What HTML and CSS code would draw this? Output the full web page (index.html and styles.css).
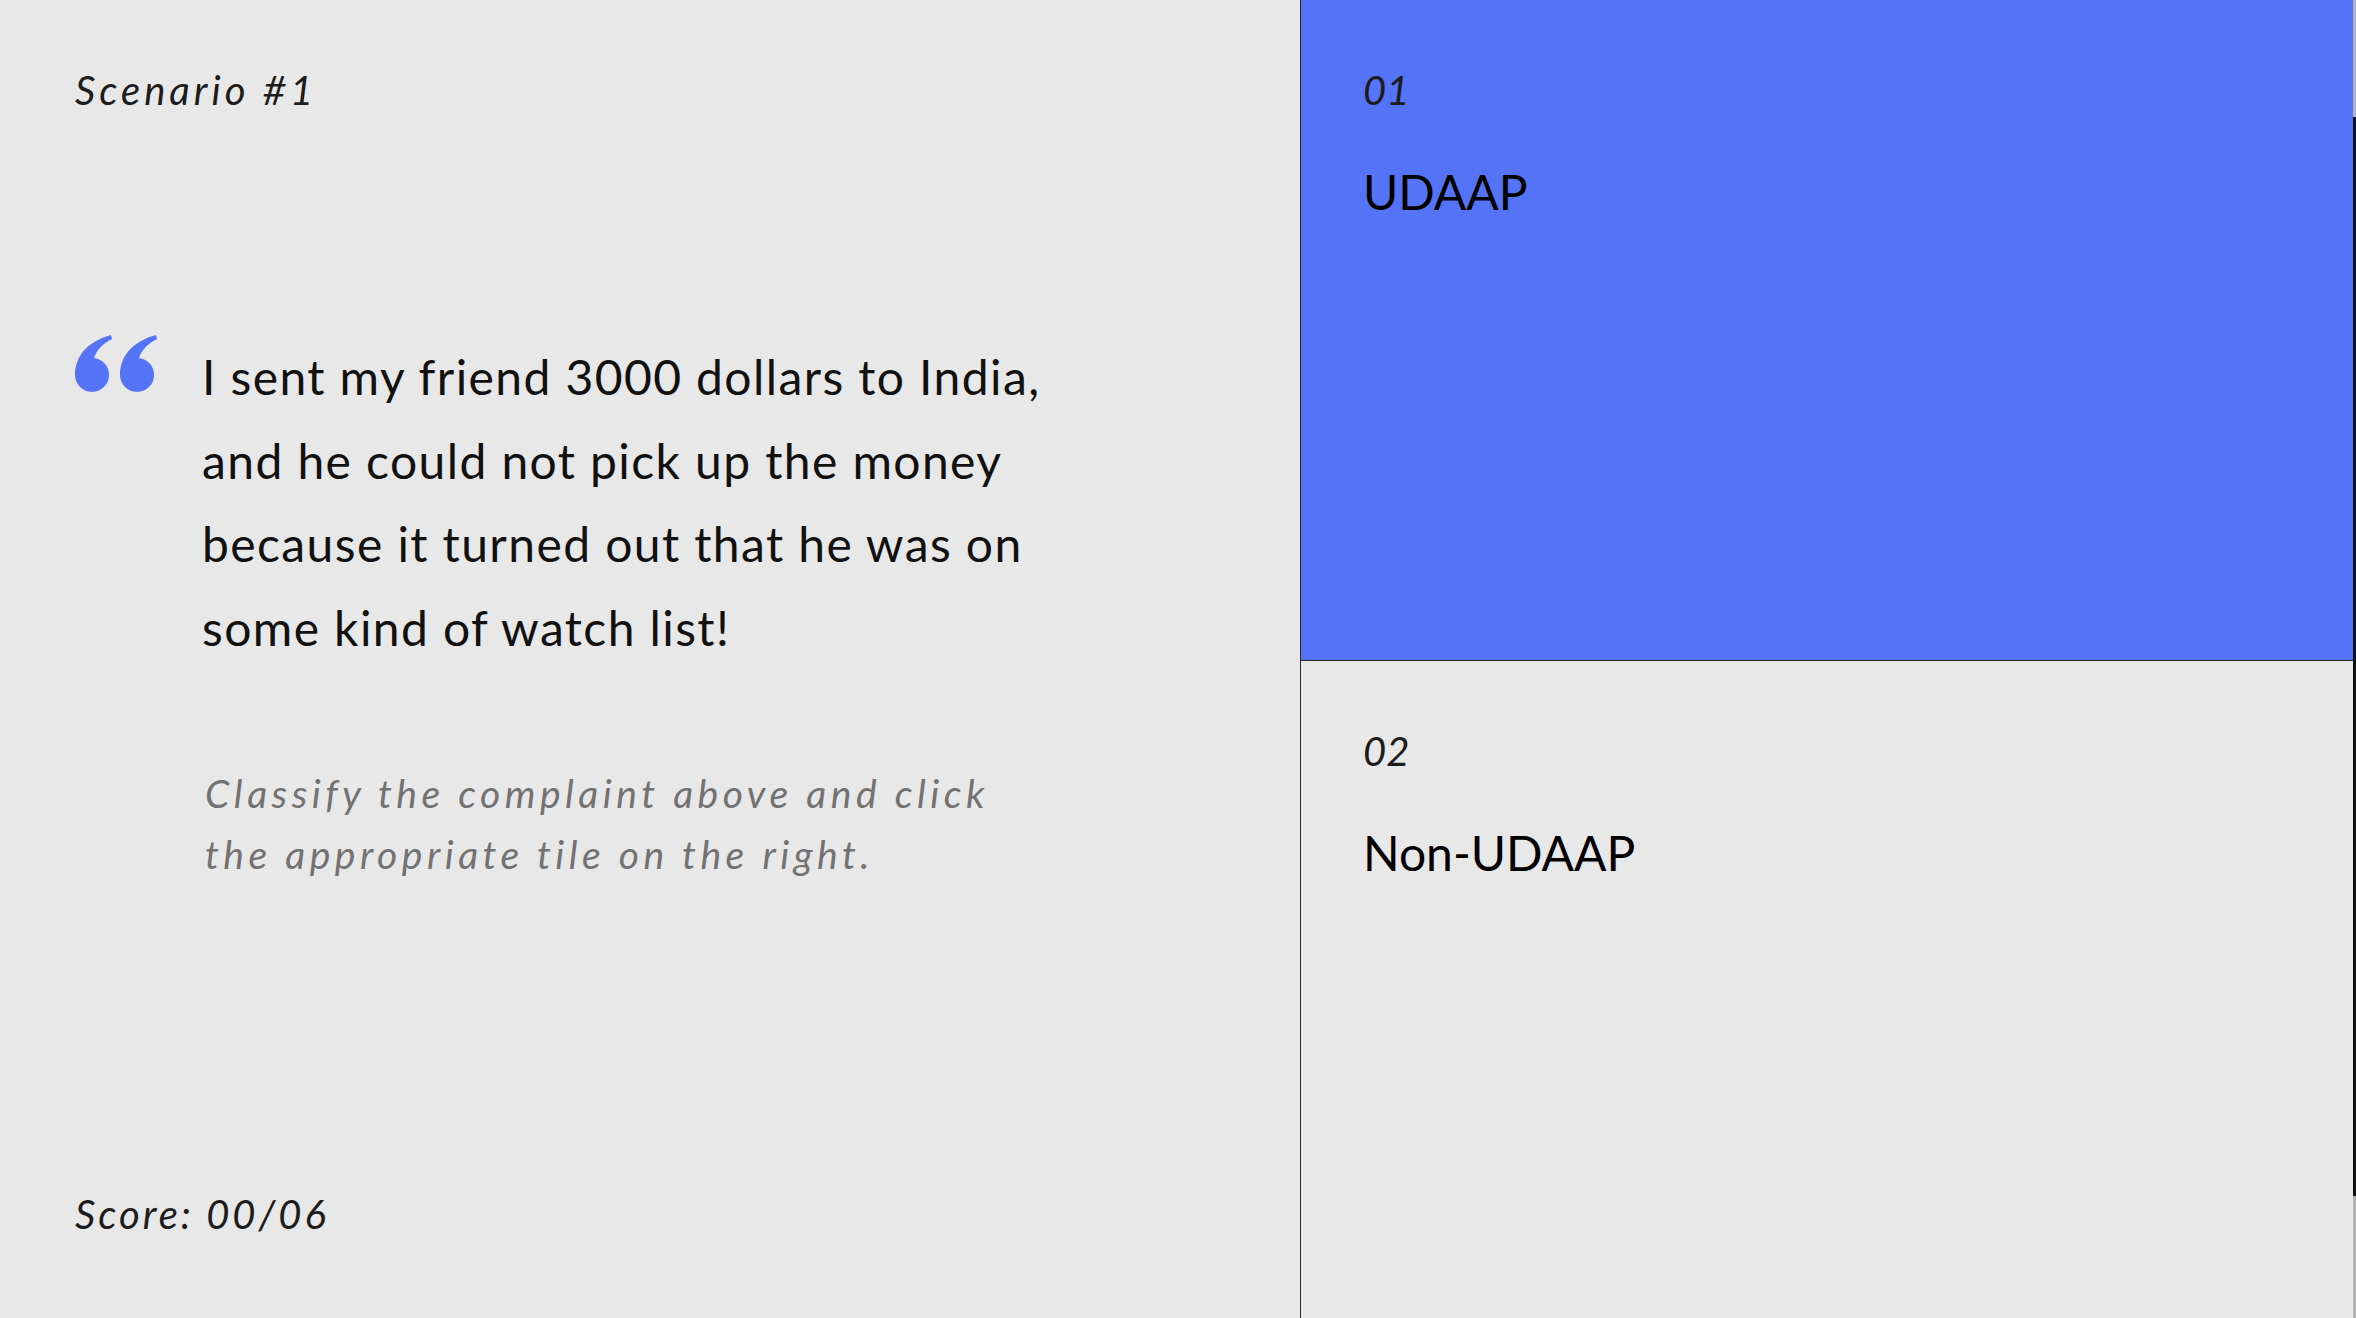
FILE: index.html
```html
<!DOCTYPE html>
<html lang="en">
<head>
  <meta charset="UTF-8" />
  <meta name="viewport" content="width=device-width, initial-scale=1.0" />
  <title>UDAAP Scenario</title>
  <link rel="stylesheet" href="styles.css">
</head>
<body>
  <div class="page">
    <div class="scenario">
      <div class="scenario-title">Scenario #1</div>

      <div class="quote">
        <svg class="quote-mark" width="83" height="57" viewBox="0 0 83 57">
          <path d="M0 40 C0 20 14 6 36 0 L37 4 C27 9 21 16 19 23 A17 17 0 1 1 0 40 Z" />
          <path transform="translate(45 0)" d="M0 40 C0 20 14 6 36 0 L37 4 C27 9 21 16 19 23 A17 17 0 1 1 0 40 Z" />
        </svg>
        <p class="quote-text">I sent my friend 3000 dollars to India, and he could not pick up the money because it turned out that he was on some kind of watch list!</p>
      </div>

      <p class="hint">Classify the complaint above and click the appropriate tile on the right.</p>

      <div class="score">Score: <span class="score-value">00/06</span></div>
    </div>

    <div class="tiles">
      <div class="tile active" data-answer="udaap">
        <div class="tile-num">01</div>
        <div class="tile-label">UDAAP</div>
      </div>
      <div class="tile" data-answer="non-udaap">
        <div class="tile-num">02</div>
        <div class="tile-label">Non-UDAAP</div>
      </div>
    </div>

    <div class="scrollbar"><div class="scroll-thumb"></div></div>
  </div>

  <script>
    const tiles = document.querySelectorAll('.tile');

    tiles.forEach(tile => {
      tile.addEventListener('click', () => {
        tiles.forEach(t => t.classList.remove('active'));
        tile.classList.add('active');
      });
    });
  </script>
</body>
</html>
```

FILE: styles.css
```css
:root {
  --blue: #5573f6;
  --bg: #e8e8e8;
  --text: #111111;
  --muted: #727272;
  --line: #2a2a2a;
}

body {
  font-family: Lato, 'Noto Sans', sans-serif;
  background-color: var(--bg);
  margin: 0;
  padding: 0;
  color: var(--text);
}

.page {
  position: relative;
  display: flex;
  height: 1318px;
  overflow: hidden;
}

.scenario {
  flex: 0 0 1300px;
  display: flex;
  flex-direction: column;
  padding: 70px 0 84px 75px;
  box-sizing: border-box;
}

.scenario-title,
.score,
.tile-num {
  font-size: 40px;
  line-height: 40px;
  font-style: italic;
  letter-spacing: 4px;
  color: #1c1c1c;
}

.score {
  margin-top: auto;
  letter-spacing: 3px;
}

.quote {
  display: flex;
  gap: 44px;
  margin-top: 225px;
}

.quote-mark {
  flex: 0 0 auto;
  fill: var(--blue);
}

.quote-text {
  margin: 0;
  width: 920px;
  font-size: 48px;
  line-height: 83.5px;
  letter-spacing: 1.4px;
}

.hint {
  margin: 94px 0 0 130px;
  width: 810px;
  font-size: 39px;
  line-height: 61px;
  font-style: italic;
  letter-spacing: 4.5px;
  color: var(--muted);
}

.tiles {
  flex: 1;
  display: flex;
  flex-direction: column;
  border-left: 1px solid var(--line);
  margin-right: 3px;
}

.tile {
  flex: 0 0 660px;
  padding: 70px 0 0 62px;
  box-sizing: border-box;
  cursor: pointer;
}

.tile + .tile {
  flex: 1;
  border-top: 1px solid var(--line);
}

.tile .tile-num {
  letter-spacing: 0;
}

.tile.active {
  background-color: var(--blue);
}

.tile-label {
  margin-top: 58px;
  font-size: 48px;
  line-height: 48px;
  color: #000;
}

.scrollbar {
  position: absolute;
  top: 0;
  right: 0;
  width: 3px;
  height: 100%;
  background-color: #b4b4b4;
}

.scroll-thumb {
  margin-top: 117px;
  height: 1079px;
  background-color: #111;
}
```
